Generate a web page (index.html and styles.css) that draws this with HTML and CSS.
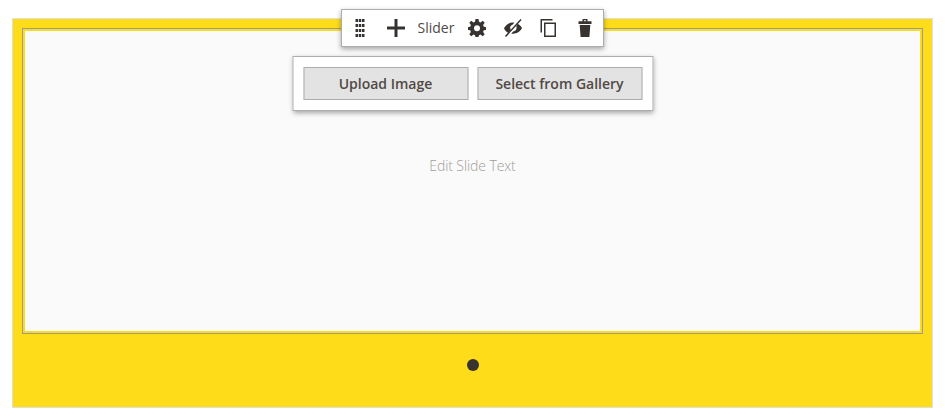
FILE: index.html
```html
<!DOCTYPE html>
<html lang="en">
<head>
<meta charset="utf-8">
<title>Slider</title>
<link rel="stylesheet" href="styles.css">
</head>
<body>
<main class="slider">
  <section class="slide-frame">
    <div class="slide"><p class="placeholder">Edit Slide Text</p></div>
  </section>
  <div class="dots"><span class="dot"></span></div>
  <div class="toolbar">
    <svg class="icon" viewBox="0 0 20 20"><path d="M5.500 1h2.500v3H5.500zM8.750 1h2.500v3h-2.500zM12 1h2.500v3H12zM5.500 6h2.500v3H5.500zM8.750 6h2.500v3h-2.500zM12 6h2.500v3H12zM5.500 11h2.500v3H5.500zM8.750 11h2.500v3h-2.500zM12 11h2.500v3H12zM5.500 16h2.500v3H5.500zM8.750 16h2.500v3h-2.500zM12 16h2.500v3H12z"/></svg>
    <svg class="icon" viewBox="0 0 20 20"><path d="M8.500 1h3v7.500H19v3h-7.500V19h-3v-7.500H1v-3h7.500z"/></svg>
    <span class="title">Slider</span>
    <svg class="icon" viewBox="0 0 20 20"><path fill-rule="evenodd" d="M8.500 1h3l.5 2.800 1.500.6 2.300-1.600 1.900 1.900-1.600 2.300.7 1.700 2.200.3v3l-2.200.3-.7 1.700 1.600 2.300-1.900 1.900-2.300-1.600-1.500.6-.5 1.800h-3L8 17.200l-1.500-.6-2.300 1.600-1.900-1.900 1.600-2.300-.7-1.700L1 12V9l2.200-.3.7-1.700-1.600-2.300 1.900-1.900 2.300 1.600L8 3.800zM10 7.300a3 3 0 1 0 0 6 3 3 0 0 0 0-6z"/></svg>
    <svg class="icon" viewBox="0 0 20 20"><path d="M1 10.200c2.200-4 6-6.100 10.300-5.500L9.500 6.700C6.800 7.500 6.600 10.400 8 12L5.200 15C3.300 13.900 1.900 12.200 1 10.200zM14.800 5.700C16.800 6.800 18.200 8.200 19 10.200c-2.300 4-6 6.100-10.700 5.300l1.900-2c3-.4 4.100-3.200 3-5.500z"/><path class="stroke" d="M2.500 18.500 18 1.500"/></svg>
    <svg class="icon" viewBox="0 0 20 20"><path class="stroke" d="M2.250 14.500V1.700H13.500M5.750 5.200h10.500v13H5.750z"/></svg>
    <svg class="icon" viewBox="0 0 20 20"><path fill-rule="evenodd" d="M7.500 1h5v2.200h4V6h-13V3.200h4zM8.900 2.200v1h2.200v-1zM4.700 7h10.600l-.9 12H5.600z"/></svg>
  </div>
  <div class="upload-panel">
    <button class="button">Upload Image</button>
    <button class="button">Select from Gallery</button>
  </div>
</main>
</body>
</html>
```
FILE: styles.css
```css
* { box-sizing: border-box; }
body {
  margin: 0;
  background: #fff;
  font-family: "Open Sans", sans-serif;
  font-size: 14px;
  color: #41362f;
}
.slider {
  position: relative;
  width: 921px;
  height: 390px;
  margin: 18px 0 0 12px;
  padding: 9px;
  border: 1px solid #dfdfdf;
  background: #fedc19;
}
.slide-frame {
  height: 306px;
  padding: 2px;
  border: 1px solid #999;
}
.slide {
  height: 100%;
  padding-top: 125px;
  background: #fafafa;
  text-align: center;
}
.placeholder {
  margin: 0;
  line-height: 20px;
  font-weight: 300;
  letter-spacing: -.1px;
  color: #a09d99;
}
.dots {
  display: flex;
  justify-content: center;
  padding-top: 25px;
}
.dot {
  width: 12px;
  height: 12px;
  border-radius: 50%;
  background: #373330;
}
.toolbar, .upload-panel {
  position: absolute;
  left: 50%;
  transform: translateX(-50%);
  display: flex;
  align-items: center;
  background: #fff;
  border: 1px solid #adadad;
  box-shadow: 0 2px 5px rgba(0, 0, 0, .35);
}
.toolbar {
  top: -10px;
  left: 328px;
  width: 263px;
  height: 38px;
  padding-left: 8px;
  gap: 16px;
  transform: none;
}
.icon {
  flex: none;
  width: 20px;
  height: 20px;
  fill: #373330;
}
.stroke {
  fill: none;
  stroke: #373330;
  stroke-width: 1.500;
}
.title {
  width: 37px;
  margin: 0 -4.500px;
  margin-right: -4px;
  line-height: 20px;
  color: #514943;
}
.title + .icon {
  margin-left: .5px;
}
.upload-panel {
  top: 37px;
  width: 361px;
  height: 55px;
  padding: 10px;
  gap: 9px;
}
.button {
  flex: 1;
  height: 33px;
  padding: 0;
  border: 1px solid #adadad;
  background: #e3e3e3;
  color: #514943;
  font: 600 14px/20px "Open Sans", sans-serif;
  white-space: nowrap;
}
```
